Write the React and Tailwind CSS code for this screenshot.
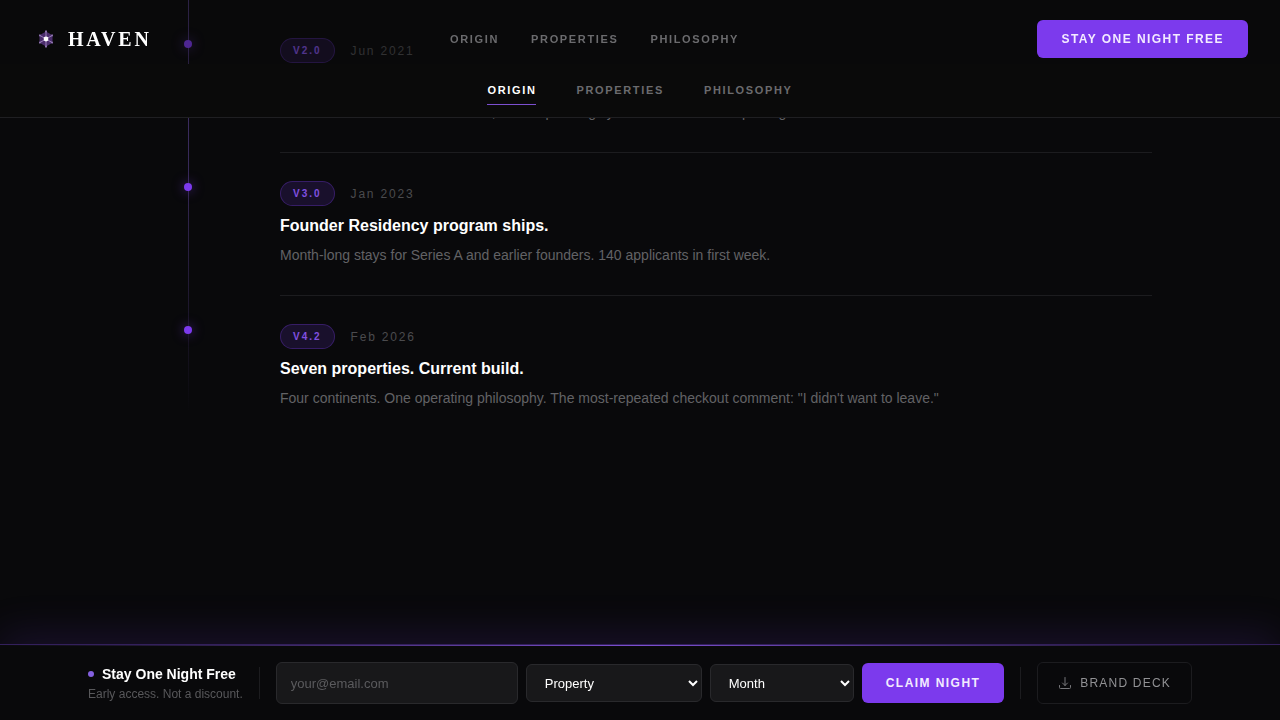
import React, { useState } from 'react'

const SECTIONS = ['Origin', 'Properties', 'Philosophy']

const RELEASES = [
  { version: 'V2.0', date: 'Jun 2021', title: 'Second home opens.', text: 'The other house in a second zone, same operating system. We resisted replacing the decor.' },
  { version: 'V3.0', date: 'Jan 2023', title: 'Founder Residency program ships.', text: 'Month-long stays for Series A and earlier founders. 140 applicants in first week.' },
  { version: 'V4.2', date: 'Feb 2026', title: 'Seven properties. Current build.', text: 'Four continents. One operating philosophy. The most-repeated checkout comment: "I didn\'t want to leave."' },
]

function Logo() {
  return (
    <a href="#top" className="flex items-center gap-2 text-white">
      <svg width="28" height="28" viewBox="0 0 28 28" aria-hidden="true">
        <polygon points="14,6.500 20.500,10.200 20.500,17.800 14,21.500 7.500,17.800 7.500,10.200" fill="#4a2c6b" />
        <g stroke="#9a80b8" strokeWidth="1" strokeLinecap="round">
          <path d="M14 6v16M7.500 10.200l13 7.600M7.500 17.800l13-7.600" />
        </g>
        <g fill="#8f74b0">
          <circle cx="14" cy="6.500" r="1" />
          <circle cx="14" cy="21.500" r="1" />
          <circle cx="8" cy="10.500" r="1" />
          <circle cx="20" cy="17.500" r="1" />
          <circle cx="8" cy="17.500" r="1" />
          <circle cx="20" cy="10.500" r="1" />
        </g>
        <circle cx="14" cy="14" r="2.400" fill="#fff" />
      </svg>
      <span className="font-['Liberation_Serif',serif] text-xl font-bold tracking-[0.14em]">HAVEN</span>
    </a>
  )
}

function Header() {
  return (
    <header className="fixed inset-x-0 top-0 z-30 flex h-16 items-center justify-between bg-[#09090b]/40 px-8 pt-3.5">
      <Logo />
      <nav aria-label="Main" className="flex gap-8">
        {SECTIONS.map(s => (
          <a key={s} href={`#${s.toLowerCase()}`} className="text-[11px] font-bold uppercase tracking-[0.15em] text-[#6b6b6e]">{s}</a>
        ))}
      </nav>
      <button className="h-[38px] rounded-md bg-[#7c3aed] px-6 text-xs font-bold uppercase tracking-[0.12em] text-[#f3ebff]">Stay One Night Free</button>
    </header>
  )
}

function SubNav({ active, onSelect }) {
  return (
    <nav aria-label="Sections" className="fixed inset-x-0 top-16 z-20 flex h-[54px] items-center justify-center gap-10 border-b border-[#1f1f22] bg-[#0a0a0a]">
      {SECTIONS.map(s => (
        <a
          key={s}
          href={`#${s.toLowerCase()}`}
          onClick={() => onSelect(s)}
          className={`border-b py-1.5 text-[11px] font-bold uppercase tracking-[0.15em] ${active === s ? 'border-[#7c4fd0] text-white' : 'border-transparent text-[#6b6b6e]'}`}
        >
          {s}
        </a>
      ))}
    </nav>
  )
}

function Release({ version, date, title, text }) {
  return (
    <li className="group grid grid-cols-[120px_1fr] gap-8">
      <div className="flex justify-center pt-[30px]">
        <span className="size-2 rounded-full bg-[#7c3aed] shadow-[0_0_12px_rgba(124,58,237,0.6)]" />
      </div>
      <div className="border-b border-[#1c1c1f] py-7 group-last:border-transparent">
        <div className="flex items-center gap-4">
          <span className="rounded-full border border-[#7c3aed]/30 bg-[#7c3aed]/15 px-3 py-1 text-[10px] leading-[15px] font-bold tracking-[0.2em] text-[#8150e0]">{version}</span>
          <time className="text-xs tracking-[0.15em] text-[#4b4b4e]">{date}</time>
        </div>
        <h3 className="mt-2 text-base font-bold text-white">{title}</h3>
        <p className="mt-[5px] text-sm leading-6 text-[#626265]">{text}</p>
      </div>
    </li>
  )
}

function ClaimBar() {
  const [email, setEmail] = useState('')
  const select = 'h-[38px] rounded-md border border-[#29292c] bg-[#18181a] pl-3.5 text-[13px] text-white'

  return (
    <footer className="fixed inset-x-0 bottom-0 z-30 border-t border-[#33205c] bg-[#09090b] shadow-[0_-12px_40px_rgba(124,58,237,0.13)]">
      <div className="h-px bg-linear-to-r from-transparent via-[#7c4fd0] to-transparent" />
      <div className="flex h-[74px] items-center justify-center gap-4">
        <div>
          <p className="flex items-center gap-2 text-sm font-bold text-white">
            <span className="size-1.5 rounded-full bg-[#8460e0]" />
            Stay One Night Free
          </p>
          <p className="mt-0.5 text-xs text-[#58585b]">Early access. Not a discount.</p>
        </div>
        <span className="h-8 w-px bg-[#1c1c1f]" />
        <form className="flex items-center gap-2" onSubmit={e => e.preventDefault()}>
          <input
            type="email"
            aria-label="Email"
            placeholder="your@email.com"
            value={email}
            onChange={e => setEmail(e.target.value)}
            className="h-[42px] w-[242px] rounded-md border border-[#29292c] bg-[#18181a] px-3.5 text-[13px] text-white placeholder:text-[#5b5b5e]"
          />
          <select aria-label="Property" className={`${select} w-44`}>
            <option>Property</option>
          </select>
          <select aria-label="Month" className={`${select} w-36`}>
            <option>Month</option>
          </select>
          <button className="h-10 rounded-md bg-[#7c3aed] px-6 text-xs font-bold uppercase tracking-[0.12em] text-[#f3ebff]">Claim Night</button>
        </form>
        <span className="h-8 w-px bg-[#1c1c1f]" />
        <a href="#deck" className="flex h-[42px] items-center gap-2 rounded-md border border-[#1c1c1f] px-5 text-xs uppercase tracking-[0.1em] text-[#919194]">
          <svg width="14" height="14" viewBox="0 0 14 14" fill="none" stroke="#77777a" strokeLinecap="round" strokeLinejoin="round" aria-hidden="true">
            <path d="M7 1.500v8M4.500 7L7 9.500 9.500 7M1.500 9.500v2a1 1 0 0 0 1 1h9a1 1 0 0 0 1-1v-2" />
          </svg>
          Brand Deck
        </a>
      </div>
    </footer>
  )
}

export default function App() {
  const [active, setActive] = useState('Origin')

  return (
    <div id="top" className="min-h-screen bg-[#09090b] font-['Liberation_Sans',Arial,sans-serif]">
      <Header />
      <SubNav active={active} onSelect={setActive} />
      <main className="mx-auto max-w-5xl pb-60">
        <ol className="bg-[linear-gradient(to_bottom,rgba(139,100,230,0.45),rgba(139,100,230,0.35)_40%,rgba(139,100,230,0.12)_75%,transparent_94%)] bg-[length:1px_100%] bg-[position:60px_0] bg-no-repeat pt-2.5">
          {RELEASES.map(r => <Release key={r.version} {...r} />)}
        </ol>
      </main>
      <ClaimBar />
    </div>
  )
}
